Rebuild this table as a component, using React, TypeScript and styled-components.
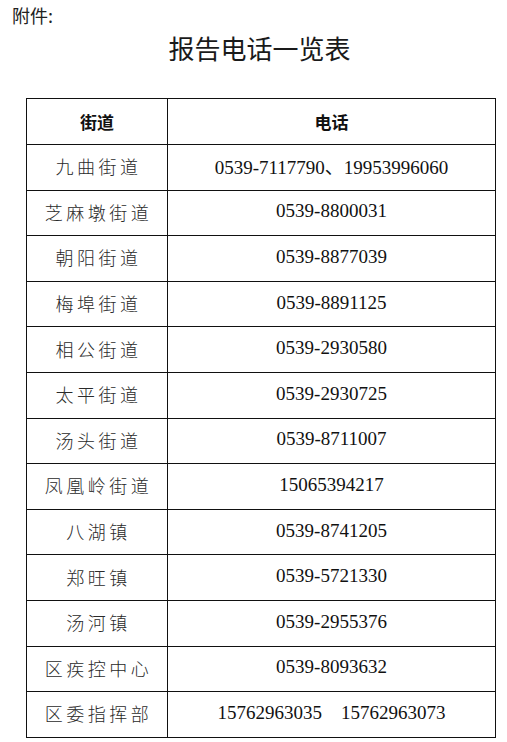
import styled, { createGlobalStyle } from 'styled-components';

const GlobalStyle = createGlobalStyle`
  html, body {
    margin: 0;
    padding: 0;
    background: #ffffff;
  }
  body {
    font-family: "Noto Sans CJK SC", "Noto Sans", sans-serif;
    color: #111;
  }
`;

const Page = styled.div`
  width: 507px;
  height: 742px;
  overflow: hidden;
  padding: 0 0 0 12px;
  box-sizing: border-box;
`;

const Attachment = styled.div`
  font-size: 18px;
  line-height: 22px;
  padding-top: 4px;
  color: #222;
`;

const Title = styled.h1`
  margin: 6px 0 0;
  text-align: center;
  font-weight: 400;
  font-size: 26px;
  line-height: 32px;
  color: #1a1a1a;
`;

const Table = styled.table`
  margin: 34px 0 0 14px;
  width: 467px;
  border-collapse: collapse;
  table-layout: fixed;
  border: 1.5px solid #111;
`;

const HeadCell = styled.th<{ $w: number }>`
  width: ${({ $w }) => $w}px;
  height: 45px;
  padding: 0;
  border: 1px solid #111;
  font-size: 17px;
  font-weight: 700;
  text-align: center;
  vertical-align: middle;
`;

const Row = styled.tr`
  height: 45.6px;
`;

const Place = styled.td`
  padding: 0 0 2px 3px;
  border: 1px solid #111;
  text-align: center;
  vertical-align: middle;
  font-size: 18px;
  letter-spacing: 3.5px;
  font-weight: 300;
  color: #2a2a2a;
  white-space: nowrap;
`;

const Phone = styled.td`
  padding: 0 0 3px;
  border: 1px solid #111;
  text-align: center;
  vertical-align: middle;
  font-family: "Liberation Serif", "Noto Sans CJK SC", serif;
  font-size: 19px;
  color: #111;
  white-space: pre;
`;

const rows: [string, string][] = [
  ['九曲街道', '0539-7117790、19953996060'],
  ['芝麻墩街道', '0539-8800031'],
  ['朝阳街道', '0539-8877039'],
  ['梅埠街道', '0539-8891125'],
  ['相公街道', '0539-2930580'],
  ['太平街道', '0539-2930725'],
  ['汤头街道', '0539-8711007'],
  ['凤凰岭街道', '15065394217'],
  ['八湖镇', '0539-8741205'],
  ['郑旺镇', '0539-5721330'],
  ['汤河镇', '0539-2955376'],
  ['区疾控中心', '0539-8093632'],
  ['区委指挥部', '15762963035    15762963073'],
];

const App = (): JSX.Element => (
  <>
    <GlobalStyle />
    <Page>
      <Attachment>附件:</Attachment>
      <Title>报告电话一览表</Title>
      <Table>
        <thead>
          <tr>
            <HeadCell $w={140}>街道</HeadCell>
            <HeadCell $w={327}>电话</HeadCell>
          </tr>
        </thead>
        <tbody>
          {rows.map(([place, phone]) => (
            <Row key={place}>
              <Place>{place}</Place>
              <Phone>{phone}</Phone>
            </Row>
          ))}
        </tbody>
      </Table>
    </Page>
  </>
);

export default App;
